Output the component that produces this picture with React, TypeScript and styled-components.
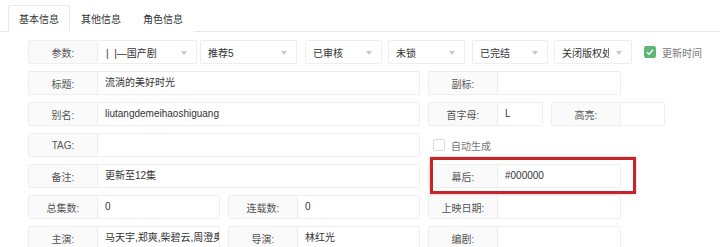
import styled, { createGlobalStyle } from "styled-components";

const GlobalStyle = createGlobalStyle`
  html, body {
    margin: 0;
    padding: 0;
    background: #ffffff;
  }
  body {
    font-family: "Liberation Sans", "Noto Sans CJK SC", sans-serif;
    font-size: 10px;
    color: #333;
  }
`;

const tabs = ["基本信息", "其他信息", "角色信息"];

const selects = [
  { text: "|\u00a0\u00a0|—国产剧", w: 99, ml: 0 },
  { text: "推荐5", w: 97, ml: 3 },
  { text: "已审核", w: 77, ml: 8 },
  { text: "未锁", w: 77, ml: 6 },
  { text: "已完结", w: 76, ml: 7 },
  { text: "关闭版权处理", w: 78, ml: 6 },
];

export default function App() {
  return (
    <>
      <GlobalStyle />
      <Page>
        <TabBar>
          {tabs.map((t, i) => (
            <Tab key={t} $active={i === 0}>
              {t}
            </Tab>
          ))}
        </TabBar>

        <Form>
          {/* 参数 */}
          <Row>
            <Label>参数:</Label>
            {selects.map((s) => (
              <Select key={s.text} $w={s.w} $ml={s.ml}>
                <SelectText>{s.text}</SelectText>
                <Caret />
              </Select>
            ))}
            <CheckWrap $ml={12}>
              <CheckBox $checked>
                <svg width="8" height="8" viewBox="0 0 8 8">
                  <path d="M1 4.2 L3.1 6.2 L7 1.8" fill="none" stroke="#fff" strokeWidth="1.4" />
                </svg>
              </CheckBox>
              <CheckText>更新时间</CheckText>
            </CheckWrap>
          </Row>

          <Row>
            <Field $w={392}>
              <Label>标题:</Label>
              <Input>流淌的美好时光</Input>
            </Field>
            <Field $w={193}>
              <Label>副标:</Label>
              <Input />
            </Field>
          </Row>

          <Row>
            <Field $w={392}>
              <Label>别名:</Label>
              <Input>liutangdemeihaoshiguang</Input>
            </Field>
            <Field $w={115}>
              <Label>首字母:</Label>
              <Input>L</Input>
            </Field>
            <Field $w={114}>
              <Label>高亮:</Label>
              <Input />
            </Field>
          </Row>

          <Row>
            <Field $w={392}>
              <Label>TAG:</Label>
              <Input />
            </Field>
            <CheckWrap $ml={5}>
              <CheckBox />
              <CheckText>自动生成</CheckText>
            </CheckWrap>
          </Row>

          <Row>
            <Field $w={392}>
              <Label>备注:</Label>
              <Input>更新至12集</Input>
            </Field>
            <Field $w={193}>
              <Label>幕后:</Label>
              <Input>#000000</Input>
              <Highlight />
            </Field>
          </Row>

          <Row>
            <Field $w={192}>
              <Label>总集数:</Label>
              <Input>0</Input>
            </Field>
            <Field $w={192}>
              <Label>连载数:</Label>
              <Input>0</Input>
            </Field>
            <Field $w={193}>
              <Label>上映日期:</Label>
              <Input />
            </Field>
          </Row>

          <Row>
            <Field $w={192}>
              <Label>主演:</Label>
              <Input>马天宇,郑爽,柴碧云,周澄奥,朱</Input>
            </Field>
            <Field $w={192}>
              <Label>导演:</Label>
              <Input>林红光</Input>
            </Field>
            <Field $w={193}>
              <Label>编剧:</Label>
              <Input />
            </Field>
          </Row>
        </Form>
      </Page>
    </>
  );
}

const Page = styled.div`
  width: 720px;
  height: 247px;
  overflow: hidden;
`;

const TabBar = styled.div`
  display: flex;
  height: 26px;
  margin-top: 5px;
  padding-left: 8px;
  border-bottom: 1px solid #e8e8e8;
`;

const Tab = styled.div<{ $active?: boolean }>`
  display: flex;
  align-items: center;
  justify-content: center;

  width: 62px;
  height: 27px;
  box-sizing: border-box;

  border: 1px solid ${(p) => (p.$active ? "#e8e8e8" : "transparent")};
  border-bottom-color: ${(p) => (p.$active ? "#fff" : "transparent")};
  border-radius: 2px 2px 0 0;
  background: #fff;

  color: #333;
`;

const Form = styled.div`
  padding: 8px 0 0 28px;
`;

const Row = styled.div`
  display: flex;
  align-items: center;
  height: 24px;
  margin-bottom: 7px;
`;

const Field = styled.div<{ $w: number }>`
  position: relative;
  display: flex;
  width: ${(p) => p.$w}px;
  height: 24px;
  margin-right: 8px;
  flex-shrink: 0;
`;

const Label = styled.div`
  display: flex;
  align-items: center;
  justify-content: center;

  width: 70px;
  height: 24px;
  flex-shrink: 0;
  box-sizing: border-box;

  background: #fafafa;
  border: 1px solid #eeeeee;
  border-radius: 2px 0 0 2px;

  color: #555;
`;

const Input = styled.div`
  flex: 1;
  min-width: 0;
  height: 24px;
  box-sizing: border-box;

  padding: 0 7px;
  line-height: 22px;

  border: 1px solid #eeeeee;
  border-left: none;
  border-radius: 0 2px 2px 0;
  background: #fff;

  white-space: nowrap;
  overflow: hidden;
  color: #333;
`;

const Select = styled.div<{ $w: number; $ml: number }>`
  position: relative;
  display: flex;
  align-items: center;

  width: ${(p) => p.$w}px;
  height: 24px;
  margin-left: ${(p) => p.$ml}px;
  flex-shrink: 0;
  box-sizing: border-box;

  padding: 0 22px 0 7px;

  border: 1px solid #eeeeee;
  border-left-color: ${(p) => (p.$ml === 0 ? "transparent" : "#eeeeee")};
  border-radius: 2px;
  background: #fff;
`;

const SelectText = styled.span`
  white-space: nowrap;
  overflow: hidden;
  color: #333;
`;

const Caret = styled.i`
  position: absolute;
  right: 9px;
  top: 10px;
  width: 0;
  height: 0;
  border-left: 3.5px solid transparent;
  border-right: 3.5px solid transparent;
  border-top: 4px solid #c8c8c8;
`;

const CheckWrap = styled.div<{ $ml: number }>`
  display: flex;
  align-items: center;
  margin-left: ${(p) => p.$ml}px;
`;

const CheckBox = styled.span<{ $checked?: boolean }>`
  display: flex;
  align-items: center;
  justify-content: center;

  width: 12px;
  height: 12px;
  box-sizing: border-box;

  border: 1px solid ${(p) => (p.$checked ? "#5fb878" : "#dcdcdc")};
  border-radius: 2px;
  background: ${(p) => (p.$checked ? "#5fb878" : "#fff")};
`;

const CheckText = styled.span`
  margin-left: 6px;
  color: #777;
`;

const Highlight = styled.div`
  position: absolute;
  left: 2px;
  top: -7px;
  width: 206px;
  height: 37px;
  box-sizing: border-box;

  border: 3px solid #c4252d;
  box-shadow: 0 0 2px rgba(196, 37, 45, 0.4);
  pointer-events: none;
`;
